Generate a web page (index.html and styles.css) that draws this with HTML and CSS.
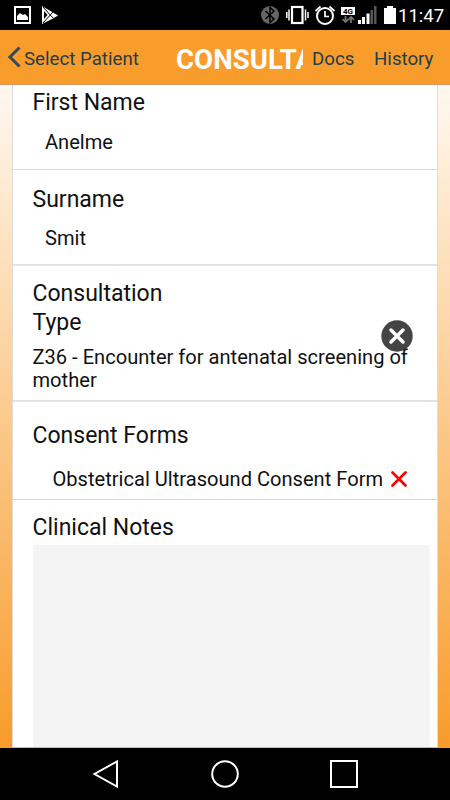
FILE: index.html
```html
<!DOCTYPE html>
<html lang="en">
<head>
    <meta charset="UTF-8">
    <meta name="viewport" content="width=device-width, initial-scale=1.0">
    <title>Consultation</title>
    <link rel="stylesheet" href="styles.css">
</head>
<body>
    <div class="status-bar">
        <svg class="status-left" width="60" height="30" viewBox="0 0 60 30">
            <rect x="15" y="7" width="15" height="16" fill="none" stroke="#fff" stroke-width="2"/>
            <path d="M17 20v-4l3-3 3 2 2-1 3 3v3z" fill="#fff"/>
            <path d="M42 6l11 6.500 5 3-5 3L42 24z" fill="#fff"/>
            <path d="M43 7l10 11M43 23l10-11" stroke="#000" stroke-width="1"/>
            <path d="M44 11v8l3.500-4z" fill="#000"/>
        </svg>
        <svg class="status-icons" width="140" height="30" viewBox="258 0 140 30">
            <circle cx="270" cy="15" r="9" fill="#666"/>
            <path d="M265.500 11l8.500 8-4 3.500V7.500l4 3.500-8.500 8" fill="none" stroke="#000" stroke-width="1.500"/>
            <rect x="292" y="7" width="10.500" height="16" fill="none" stroke="#fff" stroke-width="2.200"/>
            <path d="M289 9.500v11M286.800 12v6M305.500 9.500v11M308 12v6" stroke="#fff" stroke-width="1.500"/>
            <circle cx="325" cy="16" r="8" fill="none" stroke="#fff" stroke-width="2"/>
            <path d="M325 11v5.500h4M315.500 11l5-4.500M334.500 11l-5-4.500" fill="none" stroke="#fff" stroke-width="1.700"/>
            <rect x="341" y="7" width="14" height="8" fill="#fff"/>
            <text x="348" y="14" class="network">4G</text>
            <path d="M345.500 16v6M342.500 19l3 3 3-3M351 23v-6M348 20l3-3 3 3" fill="none" stroke="#777" stroke-width="1.700"/>
            <path d="M358 20h3v4h-3zM362 17h3v7h-3zM366.500 13.500h3V24h-3z" fill="#fff"/>
            <path d="M370.500 10h2.500v14h-2.500zM374 6h2.500v18H374z" fill="#555"/>
            <path d="M384 8h3V6h6v2h3v16h-12z" fill="#fff"/>
        </svg>
        <span class="clock">11:47</span>
    </div>

    <div class="navbar">
        <a class="back">
            <svg width="14" height="22" viewBox="0 0 14 22"><path d="M12.500 1.500L3 11l9.500 9.500" fill="none" stroke="#34495a" stroke-width="3"/></svg>
            <span>Select Patient</span>
        </a>
        <h1>CONSULTA</h1>
        <a class="docs">Docs</a>
        <a class="history">History</a>
    </div>

    <div class="page">
        <div class="card">
            <div class="row scrolled">
                <label>First Name</label>
                <div class="value">Anelme</div>
            </div>
            <div class="row">
                <label>Surname</label>
                <div class="value">Smit</div>
            </div>
            <div class="row type-row">
                <label>Consultation Type</label>
                <svg class="clear" width="32" height="32" viewBox="0 0 32 32">
                    <circle cx="16" cy="16" r="15.700" fill="#444"/>
                    <path d="M10 10l12 12M22 10L10 22" stroke="#fff" stroke-width="3.500" stroke-linecap="round"/>
                </svg>
                <div class="code">Z36 - Encounter for antenatal screening of mother</div>
            </div>
            <div class="row consent-row">
                <label>Consent Forms</label>
                <div class="consent">
                    <span>Obstetrical Ultrasound Consent Form</span>
                    <svg width="16" height="16" viewBox="0 0 16 16"><path d="M1.500 1.500l13 13M14.500 1.500l-13 13" stroke="#f00" stroke-width="2.700" stroke-linecap="round"/></svg>
                </div>
            </div>
            <div class="row notes-row">
                <label>Clinical Notes</label>
                <div class="notes"></div>
            </div>
        </div>
    </div>

    <div class="android-nav">
        <svg width="28" height="28" viewBox="0 0 28 28"><path d="M25 1.500v25L2.500 14z"/></svg>
        <svg width="28" height="28" viewBox="0 0 28 28"><circle cx="14" cy="14" r="12.800"/></svg>
        <svg width="28" height="28" viewBox="0 0 28 28"><rect x="1" y="1" width="26" height="26"/></svg>
    </div>
</body>
</html>
```

FILE: styles.css
```css
body {
    font-family: Roboto, sans-serif;
    background-color: #000;
    color: #111;
    margin: 0;
    height: 800px;
    display: flex;
    flex-direction: column;
    overflow: hidden;
}
svg {
    display: block;
    flex-shrink: 0;
}
.status-bar {
    height: 30px;
    display: flex;
    background-color: #000;
}
.status-icons {
    margin-left: 198px;
}
.network {
    font-size: 8px;
    font-weight: bold;
    text-anchor: middle;
}
.clock {
    color: #fff;
    font-size: 18.5px;
    line-height: 32px;
    white-space: nowrap;
}
.navbar {
    box-sizing: border-box;
    height: 55px;
    padding: 3px 0 0 8px;
    display: flex;
    align-items: center;
    background-color: #f89d2c;
    border-bottom: 1px solid #d09a62;
    color: #263c48;
    font-size: 18.7px;
    white-space: nowrap;
}
.back {
    display: flex;
    align-items: center;
    width: 168px;
}
.back svg {
    margin: -4px 3px 0 -1px;
}
h1 {
    margin: 2px 0 0;
    width: 127px;
    overflow: hidden;
    color: #fff;
    font-size: 27.5px;
    letter-spacing: 0.1px;
    line-height: 32px;
}
.docs {
    width: 62px;
    margin-left: 9px;
}
.page {
    height: 663px;
    padding: 0 12px;
    overflow: hidden;
    background: linear-gradient(#fff8f0, #f89c2a);
}
.card {
    height: 662px;
    overflow: hidden;
    background-color: #fff;
    border-left: 1px solid #ddd;
    border-right: 1px solid #ddd;
    border-bottom: 1px solid #bbb;
}
.row {
    box-sizing: border-box;
    height: 96px;
    padding: 15px 7px 0 19.5px;
    border-bottom: 2px solid #e2e2e2;
}
.scrolled {
    height: 95px;
    margin-top: -10px;
    padding-top: 13px;
    border-bottom: 1px solid #d8d8d8;
}
label {
    display: block;
    width: 160px;
    font-size: 23px;
    line-height: 29px;
    white-space: nowrap;
}
.value {
    padding: 13px 0 0 12.5px;
    font-size: 20.1px;
    line-height: 23px;
}
.scrolled .value {
    padding-top: 14px;
}
.type-row {
    position: relative;
    height: 136px;
    padding-top: 13px;
}
.type-row label {
    white-space: normal;
}
.clear {
    position: absolute;
    left: 367.6px;
    top: 54px;
}
.code {
    position: relative;
    padding-top: 9px;
    font-size: 20.1px;
    line-height: 23px;
}
.consent-row {
    height: 98px;
    padding-top: 19px;
    border-bottom: 1px solid #d8d8d8;
}
.consent {
    display: flex;
    align-items: center;
    padding: 18px 0 0 20px;
    font-size: 20.1px;
    line-height: 23px;
    white-space: nowrap;
}
.consent svg {
    margin: -1px 0 0 8px;
}
.notes-row {
    height: 300px;
    padding-top: 13px;
}
.notes {
    height: 240px;
    margin-top: 3px;
    border-radius: 2px;
    background-color: #f4f4f4;
}
.android-nav {
    height: 52px;
    display: flex;
    justify-content: center;
    align-items: center;
    gap: 91px;
}
.android-nav svg {
    fill: none;
    stroke: #fff;
    stroke-width: 2;
}
```
